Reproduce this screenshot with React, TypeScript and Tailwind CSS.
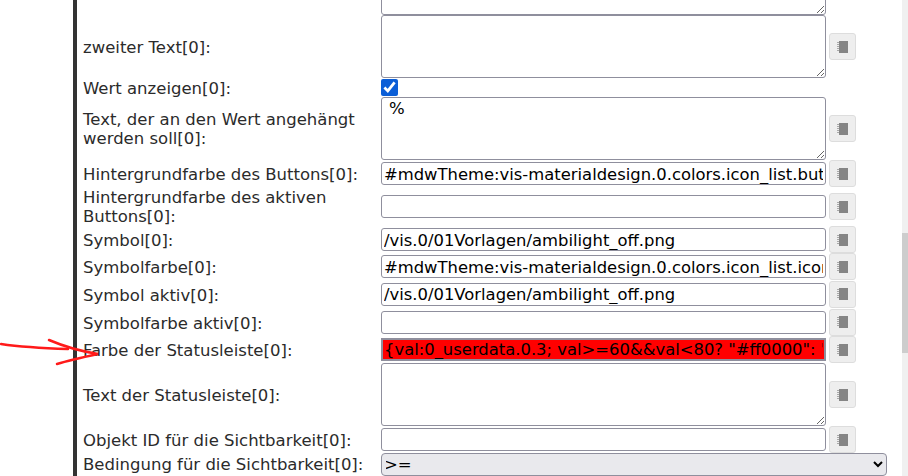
const field = 'block w-full h-full border border-[#8f8f9d] rounded-[3px] bg-white text-black outline-none';

function PickerButton() {
  return (
    <button type="button" className="w-[27px] h-[27px] shrink-0 flex items-center justify-center bg-[#eeeeee] border border-[#dddddd] rounded-[3px]">
      <svg className="blur-[0.4px]" width="11" height="12" viewBox="0 0 11 12">
        <rect x="2" y="0" width="9" height="12" fill="#858585" />
        <path d="M0 1.5h2M0 3.5h2M0 5.5h2M0 7.5h2M0 9.5h2" stroke="#a8a8a8" strokeWidth="1" />
      </svg>
    </button>
  );
}

interface RowProps {
  label: string;
  height: string;
  controlH: string;
  btn?: boolean;
  twoLines?: boolean;
  children: React.ReactNode;
}

function Row({ label, height, controlH, btn = true, twoLines, children }: RowProps) {
  return (
    <div className={`flex items-center ${height}`}>
      <div className={`w-[298px] pr-1 leading-[19px] text-[#2b2b2b] ${twoLines ? '' : 'pt-[2px]'}`}>{label}</div>
      <div className={`w-[445px] shrink-0 mr-[3px] ${controlH}`}>{children}</div>
      {btn && <PickerButton />}
    </div>
  );
}

function TextRow({ label, value, height, red, twoLines }: { label: string; value?: string; height: string; red?: boolean; twoLines?: boolean }) {
  return (
    <Row label={label} height={height} controlH="h-[23px]" twoLines={twoLines}>
      <input
        readOnly
        defaultValue={value}
        className={
          red
            ? 'block w-full h-full border-2 border-[#8f8f9d] bg-[#ff0000] text-black text-[16.4px] px-[1px] outline-none'
            : `${field} text-[16.4px] pt-[1px] px-[2px]`
        }
      />
    </Row>
  );
}

function AreaRow({ label, value, twoLines }: { label: string; value?: string; twoLines?: boolean }) {
  return (
    <Row label={label} height="h-[63px]" controlH="h-[63px]" twoLines={twoLines}>
      <textarea readOnly defaultValue={value} className={`${field} pl-[7px] pt-[2px] leading-[18px]`} />
    </Row>
  );
}

export default function App() {
  return (
    <div className="relative flex w-[908px] h-[476px] overflow-hidden bg-white font-['DejaVu_Sans',sans-serif] text-[16.5px]">
      <div className="w-[73px] shrink-0" />
      <div className="w-[4px] shrink-0 bg-[#333333]" />
      <div className="w-[6px] shrink-0" />
      <div className="w-[811px] shrink-0">
        <div className="h-[15px] overflow-hidden flex">
          <div className="w-[298px]" />
          <div className="w-[445px] h-[15px] overflow-hidden">
            <textarea readOnly className={`${field} !h-[62px] -mt-[47px]`} />
          </div>
        </div>
        <AreaRow label="zweiter Text[0]:" />
        <Row label="Wert anzeigen[0]:" height="h-[19px]" controlH="h-[17px]" btn={false}>
          <input type="checkbox" readOnly checked className="block w-[17px] h-[17px] m-0 accent-[#0b5ed7]" />
        </Row>
        <AreaRow label="Text, der an den Wert angehängt werden soll[0]:" value="%" twoLines />
        <TextRow label="Hintergrundfarbe des Buttons[0]:" value="#mdwTheme:vis-materialdesign.0.colors.icon_list.button" height="h-[27px]" />
        <TextRow label="Hintergrundfarbe des aktiven Buttons[0]:" height="h-[39px]" twoLines />
        <TextRow label="Symbol[0]:" value="/vis.0/01Vorlagen/ambilight_off.png" height="h-[27px]" />
        <TextRow label="Symbolfarbe[0]:" value="#mdwTheme:vis-materialdesign.0.colors.icon_list.icon" height="h-[27px]" />
        <TextRow label="Symbol aktiv[0]:" value="/vis.0/01Vorlagen/ambilight_off.png" height="h-[28px]" />
        <TextRow label="Symbolfarbe aktiv[0]:" height="h-[28px]" />
        <TextRow label="Farbe der Statusleiste[0]:" value='{val:0_userdata.0.3; val>=60&&val<80? "#ff0000": "#00ff00"}' height="h-[27px]" red />
        <AreaRow label="Text der Statusleiste[0]:" />
        <TextRow label="Objekt ID für die Sichtbarkeit[0]:" height="h-[27px]" />
        <div className="flex items-center h-[23px]">
          <div className="w-[298px] shrink-0 pt-[2px] text-[#2b2b2b] whitespace-nowrap">Bedingung für die Sichtbarkeit[0]:</div>
          <select className="w-[506px] h-[23px] -indent-[2px] border border-[#8f8f9d] rounded-[4px] bg-[#e9e9ed] text-black appearance-auto outline-none">
            <option>&gt;=</option>
          </select>
        </div>
      </div>
      <div className="w-[8px] shrink-0" />
      <div className="w-[14px] shrink-0 bg-[#f0f0f0]">
        <div className="mt-[233px] h-[120px] bg-[#cdcdcd]" />
      </div>
      <svg className="absolute left-0 top-[338px] pointer-events-none" width="102" height="32" viewBox="0 0 102 32" fill="none" stroke="#ff1a1a" strokeWidth="2.5" strokeLinecap="round">
        <path d="M1 6c20 3 34 4 67 5" />
        <path d="M49 2c14 6 30 11 49 14C84 19 70 22 57 26" />
      </svg>
    </div>
  );
}
